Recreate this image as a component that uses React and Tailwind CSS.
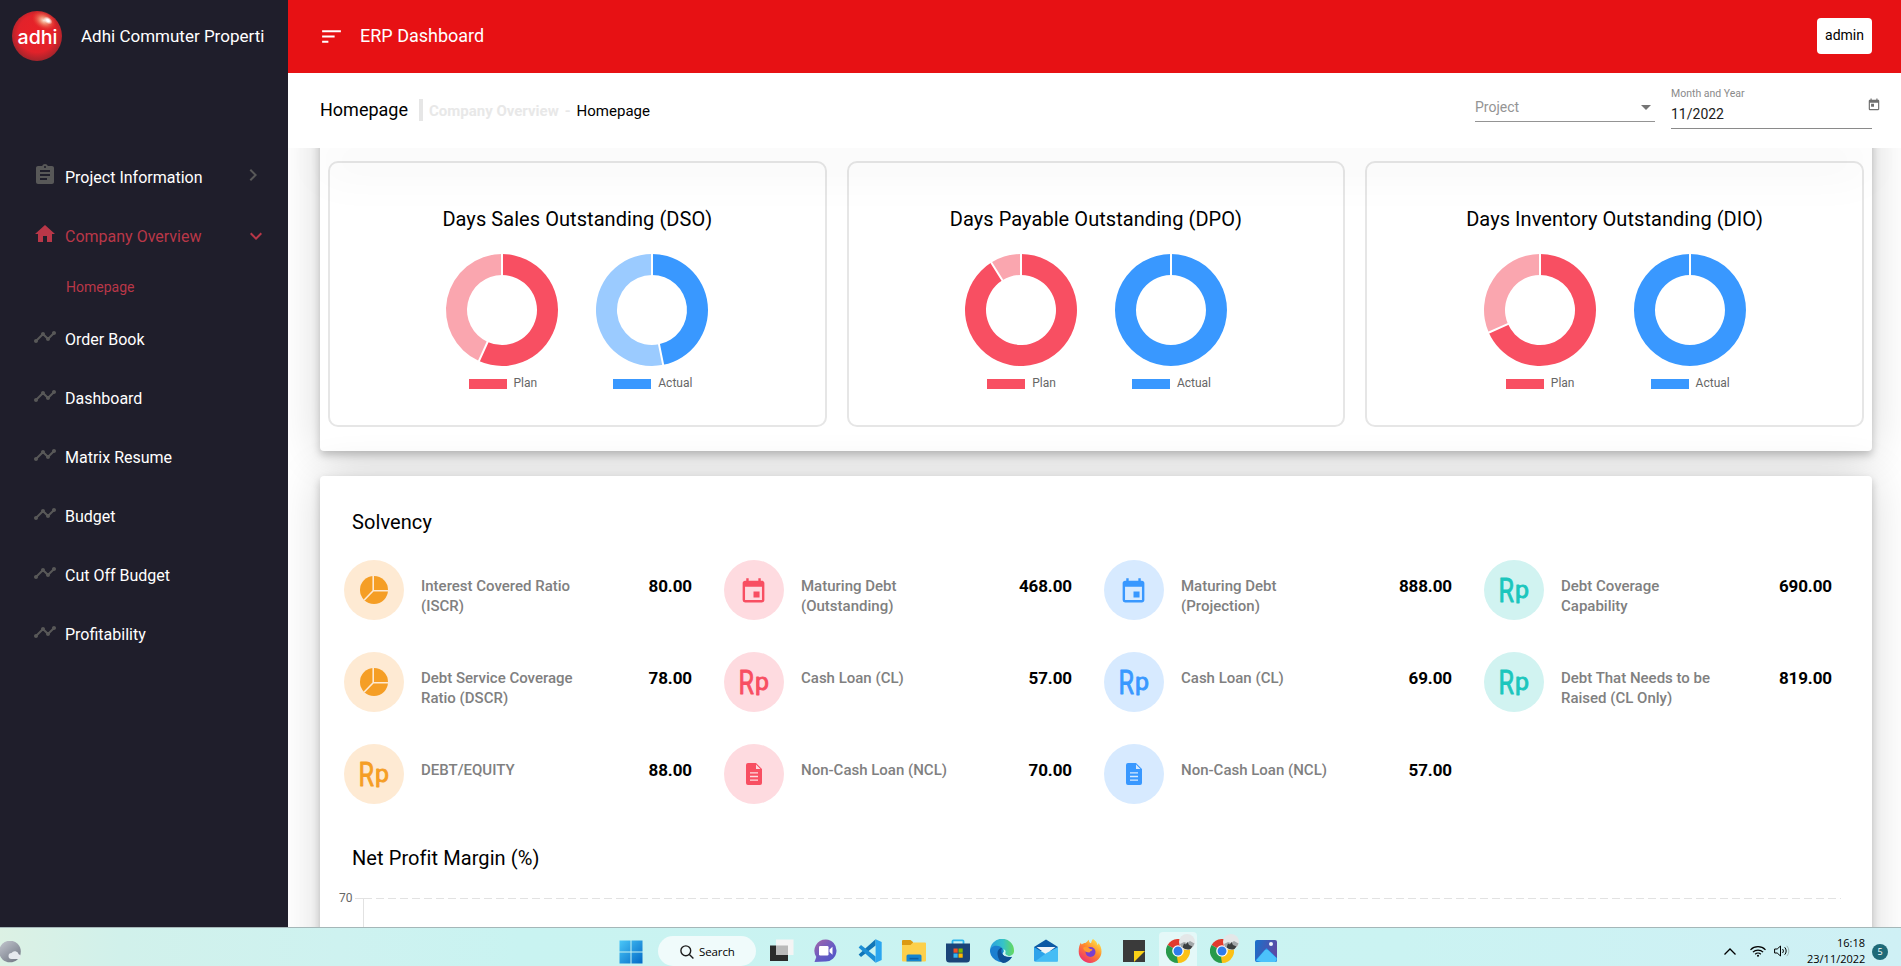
import {
  MdAssignment,
  MdChevronRight,
  MdEvent,
  MdHome,
  MdKeyboardArrowDown,
  MdSort,
  MdTimeline,
  MdToday,
} from "react-icons/md";

/* ---------- Sidebar ---------- */

function Logo() {
  return (
    <svg viewBox="0 0 50 50" className="size-[50px] shrink-0">
      <defs>
        <radialGradient id="ball" cx="0.5" cy="0.45" r="0.58">
          <stop offset="0" stopColor="#ea2127" />
          <stop offset="0.65" stopColor="#e2222a" />
          <stop offset="1" stopColor="#96252c" />
        </radialGradient>
        <radialGradient id="glow">
          <stop offset="0" stopColor="#fbe3cf" />
          <stop offset="0.35" stopColor="#f19a78" stopOpacity="0.85" />
          <stop offset="1" stopColor="#e8402d" stopOpacity="0" />
        </radialGradient>
        <radialGradient id="spot">
          <stop offset="0.3" stopColor="#fff" />
          <stop offset="1" stopColor="#fff" stopOpacity="0" />
        </radialGradient>
      </defs>
      <circle cx="25" cy="25" r="25" fill="url(#ball)" />
      <ellipse cx="32" cy="9.500" rx="13" ry="9" fill="url(#glow)" transform="rotate(28 32 9.500)" />
      <ellipse cx="36" cy="9.500" rx="5" ry="3.200" fill="url(#spot)" transform="rotate(35 36 9.500)" />
      <text
        x="5.500"
        y="32.500"
        textLength="40"
        lengthAdjust="spacingAndGlyphs"
        className="fill-white font-[Inter,sans-serif] text-[19px] font-medium"
      >
        adhi
      </text>
    </svg>
  );
}

const linkItems = ["Order Book", "Dashboard", "Matrix Resume", "Budget", "Cut Off Budget", "Profitability"];

function Sidebar() {
  return (
    <aside className="w-72 shrink-0 bg-[#1f1e2b] text-base leading-6 text-white">
      <div className="flex h-[72px] items-center gap-[19px] pl-3">
        <Logo />
        <span className="text-[17px] whitespace-nowrap">Adhi Commuter Properti</span>
      </div>
      <nav className="mt-[75px]">
        <div className="flex h-[59px] items-center pr-[23px] pl-[33px]">
          <MdAssignment className="-mt-[3px] size-6 text-[#585858]" />
          <span className="mt-0.5 ml-2">Project Information</span>
          <MdChevronRight className="-mt-1 ml-auto size-6 text-[#585858]" />
        </div>
        <div className="flex h-[59px] items-center pr-5 pl-[33px] text-[#b93748]">
          <MdHome className="-mt-1 size-6" />
          <span className="mt-0.5 ml-2">Company Overview</span>
          <MdKeyboardArrowDown className="mt-px ml-auto size-6" />
        </div>
        <div className="flex h-11 items-center pl-[66px] text-sm text-[#b93748]">Homepage</div>
        {linkItems.map((label) => (
          <div key={label} className="flex h-[59px] items-center pl-[33px]">
            <MdTimeline className="-mt-[3px] size-6 text-[#585858]" />
            <span className="mt-0.5 ml-2">{label}</span>
          </div>
        ))}
      </nav>
    </aside>
  );
}

/* ---------- Top bars ---------- */

function TopBar() {
  return (
    <header className="flex h-[73px] shrink-0 items-center bg-[#e71114] pr-[29px] pl-[31px] text-white">
      <MdSort className="size-[25px]" />
      <span className="-mt-0.5 ml-4 text-lg">ERP Dashboard</span>
      <button className="-mt-px ml-auto h-9 w-[55px] rounded bg-white pb-0.5 text-sm text-black">admin</button>
    </header>
  );
}

function SubBar() {
  return (
    <div className="relative z-10 flex h-[75px] shrink-0 bg-white pr-[29px] pl-8 shadow-[0_50px_50px_-30px_rgba(0,0,0,0.08)]">
      <div className="flex h-[73px] items-center">
        <h1 className="text-lg text-black">Homepage</h1>
        <span className="ml-[11px] h-[22px] w-1 bg-[#e6e6e6]" />
        <span className="mt-[3px] ml-1.5 text-[15px] font-bold whitespace-pre text-[#e8e8e8]">Company Overview</span>
        <span className="mt-[3px] ml-1.5 text-[15px] font-bold text-[#e8e8e8]">-</span>
        <span className="mt-[3px] ml-[6px] text-[15px] text-black">Homepage</span>
      </div>
      <div className="ml-auto flex items-start gap-4 text-sm">
        <div className="mt-[25px] flex h-6 w-[180px] items-center justify-between border-b border-[#949494] pr-1 pb-1.5 text-[#949494]">
          <span>Project</span>
          <svg viewBox="0 0 10 5" className="mt-px h-[5px] w-2.5 fill-[#757575]">
            <path d="M0 0h10L5 5z" />
          </svg>
        </div>
        <div className="flex h-14 w-[201px] items-start border-b border-[#8a8a8a] pt-[13px]">
          <div className="flex flex-col">
            <span className="text-[10.500px] leading-4 text-[#8a8a8a]">Month and Year</span>
            <span className="mt-px leading-[22px] text-[#212121]">11/2022</span>
          </div>
          <MdToday className="mt-3 -mr-[9px] ml-auto size-[14px] text-[#6f6f6f]" />
        </div>
      </div>
    </div>
  );
}

/* ---------- Ratio charts ---------- */

const palettes = {
  plan: { main: "#f84f62", rest: "#faa6af" },
  actual: { main: "#3998ff", rest: "#9bcbff" },
};

function point(radius, turn) {
  const a = turn * 2 * Math.PI;
  return [(75 + radius * Math.sin(a)).toFixed(2), (57 - radius * Math.cos(a)).toFixed(2)].join(" ");
}

function slice(from, to) {
  const large = to - from > 0.5 ? 1 : 0;
  return `M${point(56, from)}A56 56 0 ${large} 1 ${point(56, to)}L${point(35, to)}A35 35 0 ${large} 0 ${point(35, from)}Z`;
}

function Donut({ kind, share, label }) {
  const colors = palettes[kind];
  const end = Math.min(share, 0.9999);
  return (
    <div className="w-[150px]">
      <svg viewBox="0 0 150 114" className="block h-[114px] w-[150px]">
        <path d={slice(0, end)} fill={colors.main} />
        {share < 1 && <path d={slice(share, 0.9999)} fill={colors.rest} />}
        <path
          d={`M${point(34, 0)}L${point(57, 0)}M${point(34, share)}L${point(57, share)}`}
          stroke="#fff"
          strokeWidth="2"
        />
      </svg>
      <div className="mt-[7px] flex h-5 items-center justify-center gap-[7px] pl-px text-xs text-[#666]">
        <span className={kind === "plan" ? "h-2.5 w-[38px] bg-[#f84f62]" : "h-2.5 w-[38px] bg-[#3998ff]"} />
        <span className="-mt-0.5 leading-4">{label}</span>
      </div>
    </div>
  );
}

const ratioCards = [
  { title: "Days Sales Outstanding (DSO)", plan: 0.5675, actual: 0.468 },
  { title: "Days Payable Outstanding (DPO)", plan: 0.911, actual: 1 },
  { title: "Days Inventory Outstanding (DIO)", plan: 0.684, actual: 1 },
];

const cardShadow = "shadow-[0_4px_9px_rgba(0,0,0,0.22),0_2px_46px_rgba(0,0,0,0.16)]";

function Ratios() {
  return (
    <section className={`-mt-40 grid grid-cols-3 gap-5 rounded bg-white px-2 pt-[173px] pb-6 ${cardShadow}`}>
      {ratioCards.map((card) => (
        <div key={card.title} className="flex h-[266px] flex-col items-center rounded-[10px] border-2 border-[#e6e6e6]">
          <h2 className="mt-[42px] text-xl leading-7 tracking-[0.06px] text-black">{card.title}</h2>
          <div className="mt-5 flex">
            <Donut kind="plan" share={card.plan} label="Plan" />
            <Donut kind="actual" share={card.actual} label="Actual" />
          </div>
        </div>
      ))}
    </section>
  );
}

/* ---------- Solvency ---------- */

function PieIcon() {
  return (
    <svg viewBox="0 0 28 28" className="size-7">
      <circle cx="14" cy="14" r="14" fill="currentColor" />
      <path d="M13.200 0V14.800H28M13.200 14.800L4.200 24" fill="none" stroke="#feead3" strokeWidth="1.600" />
    </svg>
  );
}

function FileIcon() {
  return (
    <svg viewBox="0 0 16 22" className="h-[22px] w-4 fill-current">
      <path
        fillRule="evenodd"
        d="M2 0H10L16 6V20a2 2 0 0 1-2 2H2a2 2 0 0 1-2-2V2a2 2 0 0 1 2-2ZM10 1.600V6H14.400ZM4 9.200V10.600H12V9.200ZM4 12.800V14.200H12V12.800ZM4 16.400V17.800H12V16.400Z"
      />
    </svg>
  );
}

function RupiahIcon() {
  return (
    <svg
      viewBox="0 0 60 60"
      className="size-[60px] fill-current stroke-current stroke-[0.900] font-[Roboto,sans-serif]"
      strokeLinejoin="round"
    >
      <text x="14.600" y="41.800" textLength="15.500" lengthAdjust="spacingAndGlyphs" className="text-[33px]">
        R
      </text>
      <text x="31" y="38" textLength="14" lengthAdjust="spacingAndGlyphs" className="text-[24px]">
        p
      </text>
    </svg>
  );
}

function CalendarIcon() {
  return <MdEvent className="mt-0.5 mr-px size-[29px]" />;
}

const tones = {
  orange: "bg-[#feead3] text-[#f59e25]",
  red: "bg-[#fedbe0] text-[#f84f62]",
  blue: "bg-[#d7eaff] text-[#3998ff]",
  teal: "bg-[#d1f3f1] text-[#1cc6bd]",
};

const metrics = [
  ["orange", PieIcon, "Interest Covered Ratio (ISCR)", "80.00"],
  ["red", CalendarIcon, "Maturing Debt (Outstanding)", "468.00"],
  ["blue", CalendarIcon, "Maturing Debt (Projection)", "888.00"],
  ["teal", RupiahIcon, "Debt Coverage Capability", "690.00"],
  ["orange", PieIcon, "Debt Service Coverage Ratio (DSCR)", "78.00"],
  ["red", RupiahIcon, "Cash Loan (CL)", "57.00"],
  ["blue", RupiahIcon, "Cash Loan (CL)", "69.00"],
  ["teal", RupiahIcon, "Debt That Needs to be Raised (CL Only)", "819.00"],
  ["orange", RupiahIcon, "DEBT/EQUITY", "88.00"],
  ["red", FileIcon, "Non-Cash Loan (NCL)", "70.00"],
  ["blue", FileIcon, "Non-Cash Loan (NCL)", "57.00"],
];

function Solvency() {
  return (
    <section className={`mt-[25px] h-[600px] rounded bg-white pt-8 ${cardShadow}`}>
      <h2 className="pl-8 text-xl leading-7 tracking-[0.08px] text-black">Solvency</h2>
      <div className="mt-6 grid grid-cols-[repeat(4,348px)] gap-8 pl-6">
        {metrics.map(([tone, Icon, label, value], i) => (
          <div key={i} className="flex h-[60px]">
            <div className={`flex size-[60px] shrink-0 items-center justify-center rounded-full ${tones[tone]}`}>
              <Icon />
            </div>
            <p className="mt-4 ml-[17px] w-[160px] text-[15px] leading-5 font-medium text-[#808080]">{label}</p>
            <p className="mt-4 ml-auto text-[17px] leading-5 font-bold tracking-[-0.1px] text-black">{value}</p>
          </div>
        ))}
      </div>
      <h2 className="mt-10 pl-8 text-xl leading-7 tracking-[0.08px] text-black">Net Profit Margin (%)</h2>
      <div className="mt-4 flex pl-[19px]">
        <span className="mt-[2px] w-[13px] text-xs leading-4 text-[#666]">70</span>
        <svg viewBox="0 0 1490 60" className="ml-[3px] h-[60px] w-[1490px]" stroke="#e2e2e2">
          <path d="M0 10.500H8M8.500 10V60" />
          <path d="M9 10.500H1486" strokeDasharray="8 4" />
        </svg>
      </div>
    </section>
  );
}

/* ---------- Taskbar ---------- */

function StartIcon() {
  return (
    <svg viewBox="0 0 24 24" className="size-6">
      <defs>
        <linearGradient id="win" x1="0" y1="0" x2="24" y2="24" gradientUnits="userSpaceOnUse">
          <stop stopColor="#4cc9f9" />
          <stop offset="1" stopColor="#0067c5" />
        </linearGradient>
      </defs>
      <path fill="url(#win)" d="M.5.500h11v11H.5zM12.500.500h11v11h-11zM.5 12.500h11v11H.5zM12.500 12.500h11v11h-11z" />
    </svg>
  );
}

function TaskViewIcon() {
  return (
    <svg viewBox="0 0 24 24" className="size-6">
      <path fill="#2a2a2a" d="M0 6.500h18V22H0z" />
      <path fill="#f4f4f4" d="M6 .500h17.500V16H6z" />
      <path fill="#b9b9b9" d="M6 6.500h12V16H6z" />
    </svg>
  );
}

function ChatIcon() {
  return (
    <svg viewBox="0 0 24 24" className="size-6">
      <defs>
        <linearGradient id="chat" x1="4" y1="2" x2="20" y2="22" gradientUnits="userSpaceOnUse">
          <stop stopColor="#9a64ad" />
          <stop offset="0.5" stopColor="#6a5cc2" />
          <stop offset="1" stopColor="#4f55c8" />
        </linearGradient>
      </defs>
      <path fill="url(#chat)" d="M12 .500a11 11 0 1 1-1 22L.5 23l1.800-5A11.300 11.300 0 0 1 12 .500Z" />
      <rect x="5" y="7" width="9.500" height="9.500" rx="1.200" fill="#fff" />
      <path fill="#fff" d="M15.500 10.500l3-2.700v8l-3-2.700z" />
    </svg>
  );
}

function CodeIcon() {
  return (
    <svg viewBox="0 0 24 24" className="size-6">
      <path fill="#1176b8" d="M.6 15.400L17.600.3v6.200L3 18z" />
      <path fill="#1d8fd6" d="M.6 8.600L17.600 23.700v-6.200L3 6z" />
      <path fill="#2ba5ef" d="M17.600.3L23.700 3v18l-6.100 2.700z" />
    </svg>
  );
}

function FolderIcon() {
  return (
    <svg viewBox="0 0 24 24" className="size-6">
      <path fill="#dc9a12" d="M0 2a1 1 0 0 1 1-1h7.500L11 3v3H0z" />
      <path fill="#fdd04b" d="M0 6h8.500L11 3.500h12a1 1 0 0 1 1 1V21.500a1 1 0 0 1-1 1H1a1 1 0 0 1-1-1z" />
      <path fill="#1484d0" d="M4.500 22.500V17a1.500 1.500 0 0 1 1.500-1.500h12a1.500 1.500 0 0 1 1.500 1.500v5.500z" />
      <path fill="#0c5ea2" d="M7.500 18.800h9v1.600h-9z" />
    </svg>
  );
}

function StoreIcon() {
  return (
    <svg viewBox="0 0 24 24" className="size-6">
      <path fill="none" stroke="#2cb6ee" strokeWidth="1.800" d="M6.500 6V2.300a1 1 0 0 1 1-1h9a1 1 0 0 1 1 1V6" />
      <path fill="#1a4478" d="M0 4.500h24V20a3.500 3.500 0 0 1-3.500 3.500h-17A3.500 3.500 0 0 1 0 20z" />
      <path fill="#f25022" d="M7.500 9.500h4.200v4.200H7.500z" />
      <path fill="#7fba00" d="M12.500 9.500h4.200v4.200h-4.200z" />
      <path fill="#35b4f2" d="M7.500 14.500h4.200v4.200H7.500z" />
      <path fill="#ffb900" d="M12.500 14.500h4.200v4.200h-4.200z" />
    </svg>
  );
}

function EdgeIcon() {
  return (
    <svg viewBox="0 0 24 24" className="size-6">
      <defs>
        <linearGradient id="edgeTop" x1="0" y1="8" x2="24" y2="8" gradientUnits="userSpaceOnUse">
          <stop stopColor="#2a9fe0" />
          <stop offset="0.55" stopColor="#36c3c8" />
          <stop offset="1" stopColor="#66d95c" />
        </linearGradient>
      </defs>
      <path fill="url(#edgeTop)" d="M0 12a12 12 0 0 1 24-.5c.3 3.500-2.500 5.500-5.500 5.500-3 0-4.500-1-4.500-2.200 0-.8 1-1.300 1-2.800L6 20A12 12 0 0 1 0 12Z" />
      <path fill="#1b7fd0" d="M0 12C.5 7 6 5.500 10 7.500c3 1.500 4 4 3 6-1.500 3 2 6 9 4.300A12 12 0 0 1 0 12Z" />
      <path fill="#0d4f94" d="M7.500 14c0-3 2-5 4.500-5-1.500 3-1.500 9.500 10 8.900-2.500 4-6 6-9 6-3.500-1-5.500-5.900-5.500-9.900Z" />
      <path fill="#cdf3f3" d="M12.800 14.500c1.700-1.500 1.400-3 .5-4.300 2 .5 2.700 2 2.200 3.300-.8 2 1.500 3 3.500 3-2.500 1-5.700.3-6.200-2Z" />
    </svg>
  );
}

function MailIcon() {
  return (
    <svg viewBox="0 0 24 24" className="size-6">
      <path fill="#0c59a4" d="M0 8L12 .5 24 8v4H0z" />
      <path fill="#f2f5f8" d="M2.500 8h19L12 15z" />
      <path fill="#2ea3ea" d="M0 8l24 14.500H1a1 1 0 0 1-1-1z" />
      <path fill="#46bdf5" d="M24 8v13.500a1 1 0 0 1-1 1H1L12.500 14z" />
    </svg>
  );
}

function FirefoxIcon() {
  return (
    <svg viewBox="0 0 24 24" className="size-6">
      <defs>
        <linearGradient id="fox" x1="20" y1="2" x2="5" y2="22" gradientUnits="userSpaceOnUse">
          <stop stopColor="#ffe14a" />
          <stop offset="0.45" stopColor="#ff8a2b" />
          <stop offset="1" stopColor="#f0306e" />
        </linearGradient>
      </defs>
      <path
        fill="url(#fox)"
        d="M15 0c3 2 4 3.500 4.500 6 .8-.5 1-1.500 1-2 2 2.500 3 5.500 3 8.500a11.300 11.300 0 0 1-22.800 0C.7 8.500 1.500 5.500 3 3.500c0 1 .3 1.500.8 2 1.200-1 2-1.500 3.500-1.500C9 3.500 9.500 1.500 11 .800c-.3 2 .5 3 2 3.500C13.500 2.500 14 1 15 0Z"
      />
      <circle cx="12.500" cy="13" r="5" fill="#7a3fd0" />
      <path fill="#ff9a2e" d="M5 9c2-2 5-1.500 6.500.5 1 .8 2.500.5 3 1-.5 1.500-2.500 1.500-3 3-3 0-5.500-1.500-6.500-4.500Z" />
    </svg>
  );
}

function NotesIcon() {
  return (
    <svg viewBox="0 0 24 24" className="size-6">
      <path fill="#3a3a3a" d="M1 1h22v22H1z" />
      <path fill="#fbd116" d="M12 12h11L12 23z" />
    </svg>
  );
}

function ChromeIcon() {
  return (
    <span className="relative size-6">
      <svg viewBox="0 0 24 24" className="size-6">
        <path fill="#e33b2e" d="M12 12L1.600 6A12 12 0 0 1 22.400 6z" />
        <path fill="#fbc116" d="M12 12L22.400 6A12 12 0 0 1 12 24z" />
        <path fill="#279a4b" d="M12 12V24A12 12 0 0 1 1.600 6z" />
        <path fill="#e33b2e" d="M12 6h10.400L16 10z" />
        <path fill="#fbc116" d="M17.200 15L12 24l-1-6z" />
        <circle cx="12" cy="12" r="5.800" fill="#fff" />
        <circle cx="12" cy="12" r="4.500" fill="#2f7ceb" />
      </svg>
      <svg viewBox="0 0 16 16" className="absolute -top-[5px] left-[13px] size-4">
        <circle cx="8" cy="8" r="8" fill="#e4e7e8" />
        <path fill="#a2a7a9" d="M1 10l4-2 3 1 3-2 4.500 2.500-1.500 3-12 .5z" />
        <path fill="#3b3f40" d="M3.500 13.500L5 9.500l2 1L8.500 8l1.500 3 3.500 1.500-2 2.500a8 8 0 0 1-8-1.500z" />
      </svg>
    </span>
  );
}

function PhotosIcon() {
  return (
    <svg viewBox="0 0 24 24" className="size-6">
      <defs>
        <linearGradient id="photo" x1="2" y1="4" x2="22" y2="10" gradientUnits="userSpaceOnUse">
          <stop stopColor="#1d6fc9" />
          <stop offset="1" stopColor="#5b4aa5" />
        </linearGradient>
      </defs>
      <rect x="1" y="1" width="22" height="22" rx="2" fill="url(#photo)" />
      <path fill="#1f8fe6" d="M1.500 21L12.500 9l10.500 10v2a2 2 0 0 1-2 2H3a2 2 0 0 1-1.500-2Z" />
      <path fill="#4cc2fb" d="M2 21.500L10.500 11.500a2.500 2.500 0 0 1 4 0L22.500 19v2a2 2 0 0 1-1.500 2H7z" />
      <circle cx="17" cy="5" r="2" fill="#f3f6fb" />
    </svg>
  );
}

const apps = [
  [TaskViewIcon],
  [ChatIcon],
  [CodeIcon],
  [FolderIcon],
  [StoreIcon],
  [EdgeIcon],
  [MailIcon],
  [FirefoxIcon],
  [NotesIcon],
  [ChromeIcon, true],
  [ChromeIcon],
  [PhotosIcon],
];

function Taskbar() {
  return (
    <footer className="flex h-[39px] shrink-0 items-start border-t border-[#a5b7b8] bg-[linear-gradient(90deg,#dcf1e4_0px,#d1f1eb_120px,#cef2f0_340px,#c9f3f1_520px,#cbf3f2_1400px,#cff0f5_1901px)] font-['Open_Sans',sans-serif] text-black">
      <div className="flex w-[619px] pt-3">
        <svg viewBox="0 0 24 24" className="mt-px size-6">
          <defs>
            <linearGradient id="moon" x1="4" y1="2" x2="18" y2="20" gradientUnits="userSpaceOnUse">
              <stop stopColor="#b6bac3" />
              <stop offset="1" stopColor="#747a86" />
            </linearGradient>
          </defs>
          <circle cx="10" cy="10.500" r="10.800" fill="url(#moon)" />
          <path fill="#e6e9ee" d="M11.500 18a3 3 0 0 1 0-6 4 4 0 0 1 7.200 1.200 2.500 2.500 0 0 1 .3 4.800z" />
        </svg>
      </div>
      <div className="mt-3">
        <StartIcon />
      </div>
      <div className="mt-2 ml-[15px] flex h-[30px] w-[98px] items-center rounded-full bg-[#f0fbfb] pl-[22px]">
        <svg viewBox="0 0 14 14" className="mt-0.5 size-3.5 fill-none stroke-[#1c1c1c] stroke-[1.400]">
          <circle cx="5.800" cy="5.800" r="4.900" />
          <path d="M9.400 9.400L13.400 13.400" />
        </svg>
        <span className="mt-0.5 ml-[5px] text-[11.500px] tracking-[-0.1px]">Search</span>
      </div>
      <div className="ml-1 flex">
        {apps.map(([Icon, active], i) => (
          <div key={i} className="flex h-[38px] w-11 justify-center pt-1">
            <span
              className={
                active
                  ? "flex h-[34px] w-[38px] justify-center rounded-t bg-[#e4f8f8] pt-[7px]"
                  : "flex h-[34px] w-[38px] justify-center pt-[7px]"
              }
            >
              <Icon />
            </span>
          </div>
        ))}
      </div>
      <div className="ml-auto flex h-[38px] items-start pr-[13px]">
        <svg viewBox="0 0 12 7" className="mt-5 h-[7px] w-3 fill-none stroke-black stroke-[1.300]">
          <path d="M.5 6.500L6 1l5.500 5.500" />
        </svg>
        <svg viewBox="0 0 16 12" className="mt-[17px] ml-3.5 h-3 w-4 fill-none stroke-black stroke-[1.200]">
          <path d="M.5 4.800a10.600 10.600 0 0 1 15 0M2.900 7.200a7.200 7.200 0 0 1 10.200 0M5.200 9.300a4 4 0 0 1 5.600 0" />
          <circle cx="8" cy="10.700" r="1" className="fill-black stroke-none" />
        </svg>
        <svg viewBox="0 0 16 12" className="mt-[17px] ml-2 h-3 w-4 fill-none stroke-black">
          <path d="M.6 4h2.600L6.500 1v10L3.200 8H.6z" />
          <path d="M8.600 4a3 3 0 0 1 0 4M10.700 2.300a5.400 5.400 0 0 1 0 7.400" />
          <path d="M12.800.800a7.600 7.600 0 0 1 0 10.400" className="stroke-[#9fb5b6]" />
        </svg>
        <div className="mt-[7px] ml-[17px] w-[58px] text-right text-[11px] leading-4 whitespace-nowrap">
          <div>16:18</div>
          <div>23/11/2022</div>
        </div>
        <span className="mt-4 ml-[7px] flex size-4 items-center justify-center rounded-full bg-[#1f6a78] text-[9px] text-white">
          5
        </span>
      </div>
    </footer>
  );
}

export default function App() {
  return (
    <div className="flex h-[966px] w-[1901px] flex-col overflow-hidden bg-white font-[Roboto,sans-serif]">
      <div className="flex h-[927px] shrink-0 overflow-hidden">
        <Sidebar />
        <div className="flex min-w-0 flex-1 flex-col overflow-hidden">
          <TopBar />
          <SubBar />
          <main className="min-h-0 flex-1 overflow-hidden pr-[29px] pl-8">
            <Ratios />
            <Solvency />
          </main>
        </div>
      </div>
      <Taskbar />
    </div>
  );
}
